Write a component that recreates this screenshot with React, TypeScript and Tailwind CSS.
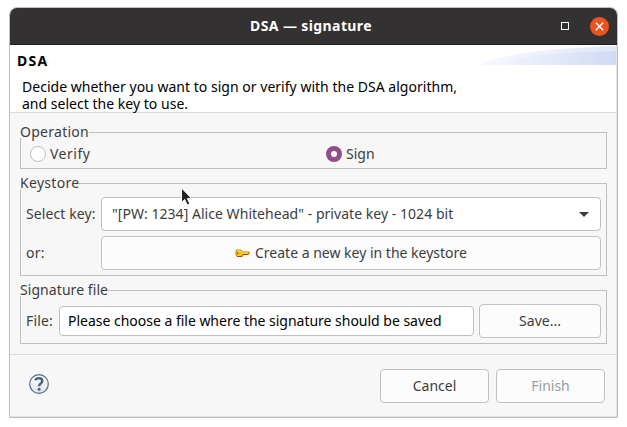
import type { ReactNode } from "react";

function Group({ title, spacing, className, children }: { title: string; spacing: string; className: string; children: ReactNode }) {
  return (
    <section className="mx-[10px]">
      <div className="flex h-[6px] items-start">
        <h2 className={`-mt-[10px] leading-5 whitespace-nowrap ${spacing}`}>{title}</h2>
        <div className="h-full flex-1 border-t border-r border-[#bfbfbf]" />
      </div>
      <div className={`border-x border-b border-[#bfbfbf] ${className}`}>{children}</div>
    </section>
  );
}

const button =
  "flex h-[34px] items-center justify-center rounded-[4px] border border-[#c1c1c1] bg-[#fcfcfc] whitespace-nowrap";

function KeyIcon() {
  return (
    <svg width="15" height="9" viewBox="0 0 15 9" className="mr-[5px] shrink-0">
      <path d="M1.500 1h4.500l1.500 2H14l.5 1-.8 1.200h-5L7 7.500H2L1 6V2z" fill="#f4c414" stroke="#c7771b" />
      <path d="M2.500 2h3l1.500 2h6" fill="none" stroke="#ffee58" />
      <path d="M2 3.500h1.500V5H2z" fill="#8f5518" />
      <path d="M2 7.500h5l1.500-2h5" fill="none" stroke="#a54a1c" />
    </svg>
  );
}

export default function App() {
  return (
    <div className="h-[427px] w-[627px] overflow-hidden bg-white pt-[7px] pl-[9px] font-['Noto_Sans','Open_Sans',sans-serif] text-[14px] leading-5 text-[#3d3d3d]">
      <main className="relative flex h-[411px] w-[609px] flex-col overflow-hidden rounded-t-[8px] border border-[#bdbdbd] bg-[#f7f7f7]">
        <header className="flex h-[37px] shrink-0 items-center border-b border-[#1f1e1e] bg-[#333131] text-white">
          <h1 className="ml-[240px] font-bold tracking-[0.4px] whitespace-nowrap">DSA — signature</h1>
          <button className="mr-[21px] ml-auto size-[8px] border border-white" aria-label="Maximize" />
          <button className="mr-[8px] flex size-[19px] items-center justify-center rounded-full bg-[#e95420]" aria-label="Close">
            <svg width="9" height="9" viewBox="0 0 9 9" stroke="white" strokeWidth="1.4">
              <path d="M.8.8l7.400 7.400M8.200.8L.8 8.200" />
            </svg>
          </button>
        </header>

        <div className="flex h-[68px] shrink-0 items-start justify-between border-b border-[#dadada] bg-white text-black">
          <div className="pt-[6px] pl-[7px] whitespace-nowrap">
            <h2 className="font-bold tracking-[1.3px]">DSA</h2>
            <p className="mt-[7px] pl-[5px] leading-[17px] tracking-[0.02px]">
              Decide whether you want to sign or verify with the DSA algorithm,
              <br />
              and select the key to use.
            </p>
          </div>
          <svg width="140" height="20" viewBox="0 0 140 20" className="-ml-[140px] shrink-0">
            <defs>
              <linearGradient id="outer">
                <stop offset="0" stopColor="#f8fafe" />
                <stop offset="1" stopColor="#dfe6f7" />
              </linearGradient>
              <linearGradient id="inner">
                <stop offset="0" stopColor="#f6f8fe" />
                <stop offset="1" stopColor="#d1daf5" />
              </linearGradient>
            </defs>
            <path d="M0 20C25 8 80 3 140 1v19z" fill="url(#outer)" />
            <path d="M10 20C40 11 90 7 140 6v14z" fill="url(#inner)" />
          </svg>
        </div>

        <div className="flex h-[241px] shrink-0 flex-col gap-[14px] pt-[19px]">
          <Group title="Operation" spacing="tracking-[0.27px]" className="grid h-[31px] grid-cols-[296px_1fr] items-center pt-[2px] pl-[9px]">
            <label className="flex items-center gap-[4px]">
              <span className="size-[16px] rounded-full border border-[#bfbfbf] bg-white" />
              <span className="tracking-[0.5px]">Verify</span>
            </label>
            <label className="flex items-center gap-[4px]">
              <span className="flex size-[16px] items-center justify-center rounded-full bg-[#924d8b]">
                <span className="size-[6px] rounded-full bg-white" />
              </span>
              <span>Sign</span>
            </label>
          </Group>

          <Group title="Keystore" spacing="tracking-[0.3px]" className="grid h-[87px] grid-cols-[75px_1fr] content-start items-center gap-y-[5px] px-[5px] pt-[8px]">
            <span className="tracking-[0.1px]">Select key:</span>
            <div className="flex h-[34px] items-center justify-between rounded-[4px] border border-[#bfbfbf] bg-white pr-[11px] pl-[10px]">
              <span className="tracking-[0.04px] whitespace-nowrap">"[PW: 1234] Alice Whitehead" - private key - 1024 bit</span>
              <svg width="10" height="5" viewBox="0 0 10 5">
                <path d="M0 0h10L5 5z" fill="#3d3d3d" />
              </svg>
            </div>
            <span className="tracking-[0.3px]">or:</span>
            <button className={button}>
              <KeyIcon />
              Create a new key in the keystore
            </button>
          </Group>

          <Group title="Signature file" spacing="tracking-[0.07px]" className="flex h-[48px] items-start px-[5px] pt-[8px]">
            <label className="flex h-[34px] flex-1 items-center">
              <span className="w-[33px] tracking-[0.17px]">File:</span>
              <input
                readOnly
                value="Please choose a file where the signature should be saved"
                className="h-[30px] min-w-0 flex-1 rounded-[4px] border border-[#bfbfbf] bg-white pr-[5px] pb-[2px] pl-[8px] tracking-[-0.015px] text-black outline-none"
              />
            </label>
            <button className={`${button} ml-[5px] w-[122px]`}>Save...</button>
          </Group>
        </div>

        <footer className="flex flex-1 items-start border-t border-[#dadada] pt-[14px] pr-[12px] pl-[19px]">
          <svg width="20" height="20" viewBox="0 0 20 20" className="mt-[5px]" aria-label="Help">
            <defs>
              <linearGradient id="help" x2="0" y2="1">
                <stop offset="0" stopColor="#ffffff" />
                <stop offset="1" stopColor="#dfe3ea" />
              </linearGradient>
            </defs>
            <circle cx="10" cy="10" r="9.300" fill="url(#help)" stroke="#566987" strokeWidth="1.200" />
            <path d="M6.300 6.200C7.300 3.700 13.300 3.400 13.300 7c0 2.700-3.200 2.500-3.200 5.300" fill="none" stroke="#4f6282" strokeWidth="2.500" />
            <circle cx="10.100" cy="15.200" r="1.500" fill="#4f6282" />
          </svg>
          <button className={`${button} ml-auto w-[109px]`}>Cancel</button>
          <button className={`${button} ml-[7px] w-[109px] text-[#9c9c9c]`} disabled>
            Finish
          </button>
        </footer>

        <svg width="12" height="20" viewBox="0 0 12 20" className="absolute top-[179px] left-[170px]">
          <path d="M1.500 1v14.500l3.200-3 2.500 5.500 2.600-1.200-2.400-5.200h4.300z" fill="#222" stroke="white" strokeWidth="1" />
        </svg>
        <div className="pointer-events-none absolute inset-x-0 top-[37px] bottom-0 border-r border-b border-[#e2e2e2]" />
      </main>
    </div>
  );
}
